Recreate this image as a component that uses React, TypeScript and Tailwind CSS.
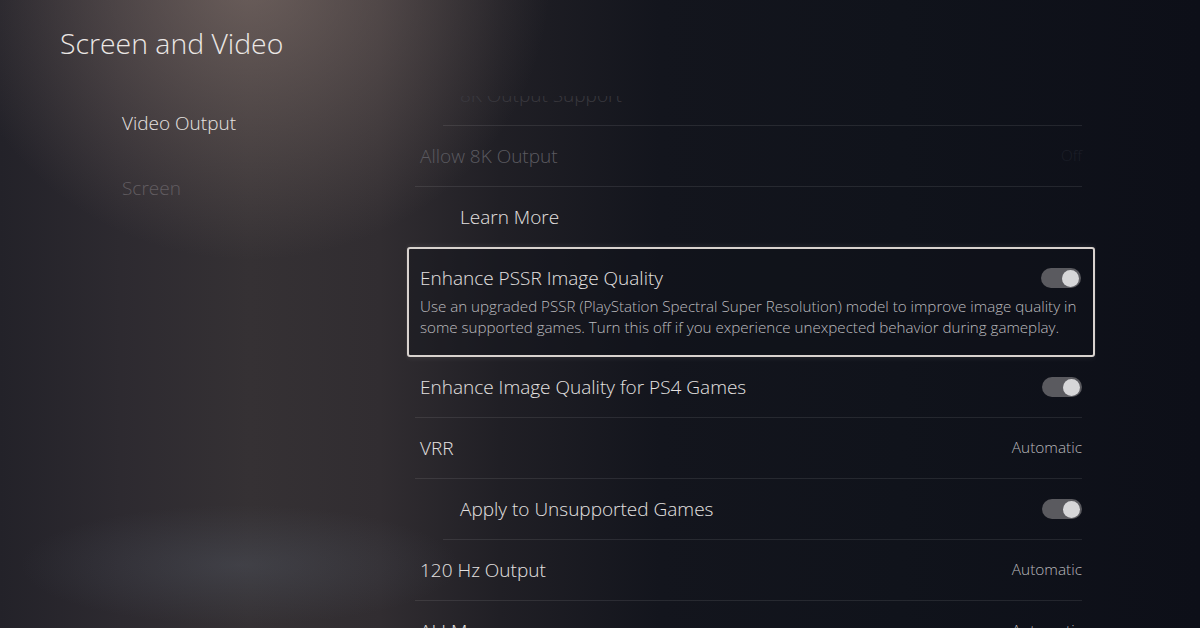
import React from "react";

type Row =
  | { kind: "toggle"; label: string; indent?: boolean }
  | { kind: "value"; label: string; value: string; indent?: boolean; dim?: boolean; faint?: boolean }
  | { kind: "link"; label: string; indent?: boolean };

const Toggle: React.FC = () => (
  <div className="w-[40px] h-[20px] rounded-full bg-[#5a5a5f] flex items-center justify-end pr-[2px] shrink-0">
    <div className="w-[17px] h-[17px] rounded-full bg-[#d6d6d8]" />
  </div>
);

const Separator: React.FC<{ indent?: boolean }> = ({ indent }) => (
  <div className={`h-px bg-white/[0.09] ${indent ? "ml-[23px]" : "-ml-[5px]"}`} />
);

const labelColor = (row: Row) => {
  if (row.kind === "value" && row.faint) return "text-[#3a393f]";
  if (row.kind === "value" && row.dim) return "text-[#5b5a60]";
  return "text-[#e4e1e0]";
};

const SettingRow: React.FC<{ row: Row }> = ({ row }) => (
  <div className={`h-[60px] flex items-center justify-between ${row.indent ? "pl-[40px]" : ""}`}>
    <span className={`text-[19px] font-light ${labelColor(row)}`}>{row.label}</span>
    {row.kind === "toggle" && <Toggle />}
    {row.kind === "value" && (
      <span className={`text-[15.4px] font-light ${row.dim ? "text-[#1c1f28]" : "text-[#b9b8bc]"}`}>{row.value}</span>
    )}
  </div>
);

export default function App() {
  return (
    <div className="w-[1200px] h-[628px] overflow-hidden font-['Open_Sans',sans-serif] bg-[radial-gradient(ellipse_300px_280px_at_250px_-20px,rgba(150,130,122,0.55),transparent),radial-gradient(ellipse_220px_60px_at_240px_565px,rgba(95,105,120,0.28),transparent),linear-gradient(to_right,#232229_0px,#2d2a30_120px,#353134_250px,#312d31_380px,#201f25_500px,#13151d_660px,#10131b_900px,#0d0f18_1200px)]">
      <div className="flex h-full">
        <aside className="w-[406px] shrink-0 pl-[60px] pt-[26px]">
          <h1 className="text-[28.4px] leading-[34px] font-light text-[#ebe7e5]">Screen and Video</h1>
          <nav className="pl-[62px] mt-[50px] flex flex-col gap-[39px]">
            <div className="text-[19px] leading-[26px] font-light text-[#e6e2e0]">Video Output</div>
            <div className="text-[19px] leading-[26px] font-light text-[#625d61]">Screen</div>
          </nav>
        </aside>

        <main className="w-[690px] shrink-0 px-[14px] mt-[96px] overflow-hidden">
          <div className="-mt-[31px]">
            <SettingRow row={{ kind: "value", label: "8K Output Support", value: "", indent: true, dim: true, faint: true }} />
            <Separator indent />
            <SettingRow row={{ kind: "value", label: "Allow 8K Output", value: "Off", dim: true }} />
            <Separator />
            <SettingRow row={{ kind: "link", label: "Learn More", indent: true }} />

            <div className="-mx-[13px] h-[110px] border-2 border-[#d8d2ce] rounded-[3px] pl-[11px] pr-[12px] pt-[17px] bg-[#0f1118]/40 shadow-[0_0_6px_rgba(255,255,255,0.12)]">
              <div className="flex items-center justify-between h-[24px]">
                <span className="text-[19px] font-light text-[#e4e1e0]">Enhance PSSR Image Quality</span>
                <Toggle />
              </div>
              <p className="mt-[6px] text-[15.15px] leading-[21px] font-light text-[#bcbbbf] whitespace-nowrap">
                Use an upgraded PSSR (PlayStation Spectral Super Resolution) model to improve image quality in
                <br />
                some supported games. Turn this off if you experience unexpected behavior during gameplay.
              </p>
            </div>

            <SettingRow row={{ kind: "toggle", label: "Enhance Image Quality for PS4 Games" }} />
            <Separator />
            <SettingRow row={{ kind: "value", label: "VRR", value: "Automatic" }} />
            <Separator />
            <SettingRow row={{ kind: "toggle", label: "Apply to Unsupported Games", indent: true }} />
            <Separator indent />
            <SettingRow row={{ kind: "value", label: "120 Hz Output", value: "Automatic" }} />
            <Separator />
            <SettingRow row={{ kind: "value", label: "ALLM", value: "Automatic" }} />
          </div>
        </main>
      </div>
    </div>
  );
}
